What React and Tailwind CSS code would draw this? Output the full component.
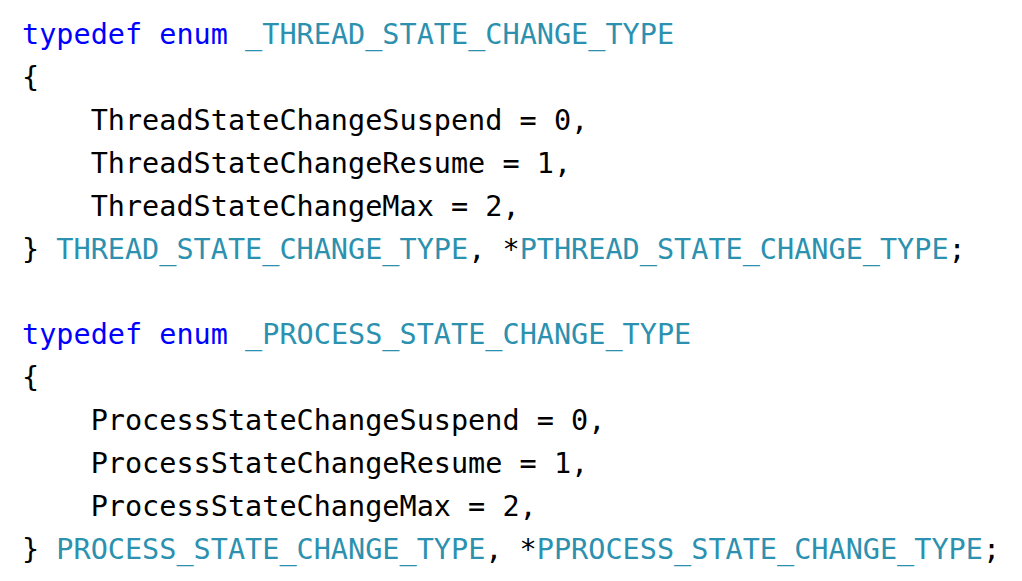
const KW = 'text-[#0000ff]';
const TY = 'text-[#2b91af]';

function EnumBlock({ name, members }) {
  return (
    <>
      <div>
        <span className={KW}>typedef</span> <span className={KW}>enum</span>{' '}
        <span className={TY}>_{name}</span>
      </div>
      <div>{'{'}</div>
      {members.map(([m, v]) => (
        <div key={m}>{`    ${m} = ${v},`}</div>
      ))}
      <div>
        {'} '}
        <span className={TY}>{name}</span>, *<span className={TY}>P{name}</span>;
      </div>
    </>
  );
}

export default function App() {
  return (
    <div className="w-[1022px] h-[581px] bg-white overflow-hidden pl-[22px] pt-[14px] text-black whitespace-pre font-['DejaVu_Sans_Mono',monospace] text-[28.5px] leading-[42.9px]">
      <EnumBlock
        name="THREAD_STATE_CHANGE_TYPE"
        members={[
          ['ThreadStateChangeSuspend', 0],
          ['ThreadStateChangeResume', 1],
          ['ThreadStateChangeMax', 2],
        ]}
      />
      <div>{' '}</div>
      <EnumBlock
        name="PROCESS_STATE_CHANGE_TYPE"
        members={[
          ['ProcessStateChangeSuspend', 0],
          ['ProcessStateChangeResume', 1],
          ['ProcessStateChangeMax', 2],
        ]}
      />
    </div>
  );
}
